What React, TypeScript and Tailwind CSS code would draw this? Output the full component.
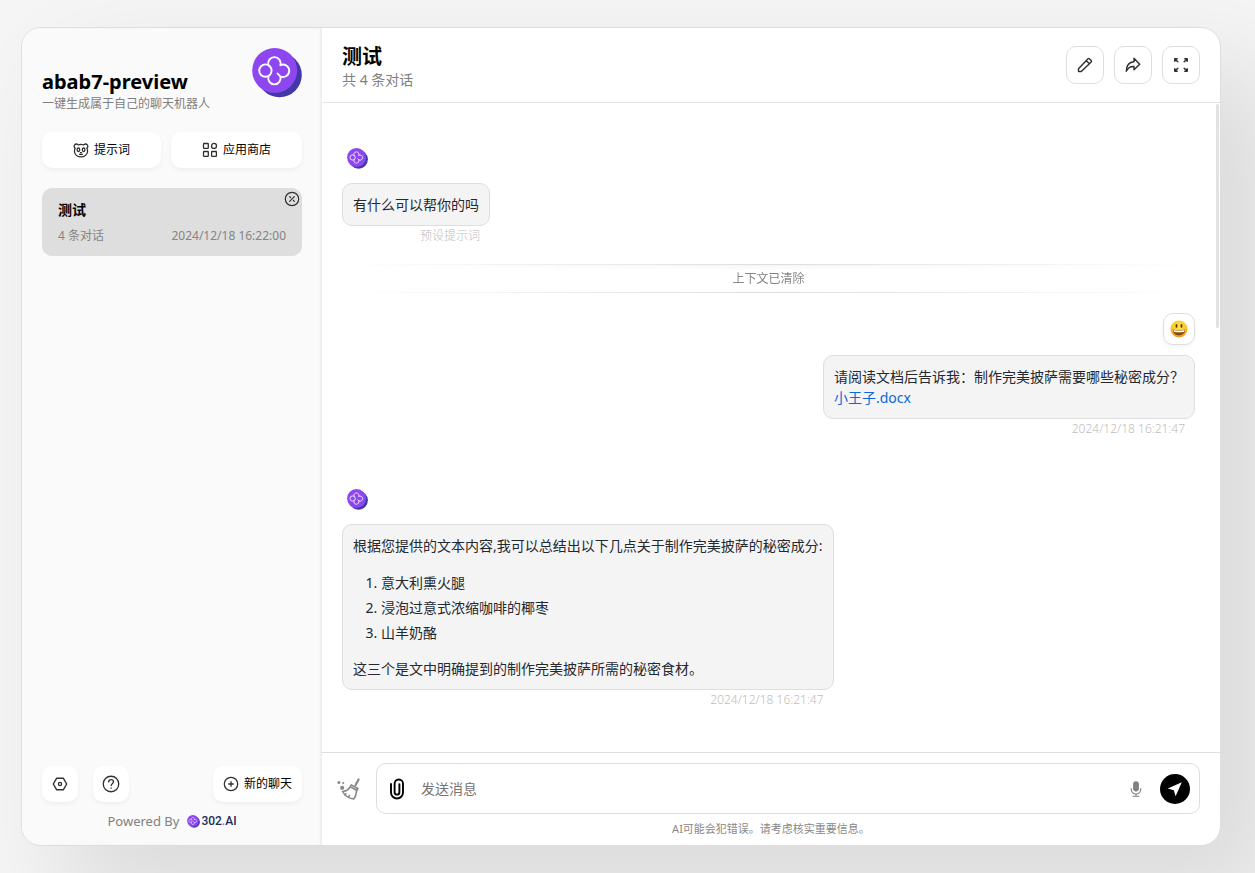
import React from "react";

function BotLogo({ className }: { className?: string }) {
  return (
    <svg viewBox="0 0 50 50" className={className} aria-hidden="true">
      <circle cx="27.5" cy="27" r="22.3" fill="#4338a8" />
      <circle cx="22.7" cy="22.5" r="22.5" fill="#8e47f0" />
      <path
        d="M16.5 17.2A6.2 6.2 0 1 1 28.3 17.2M28.3 17.2A6.2 6.2 0 1 1 28.3 28.3L25.6 25.6M28.3 28.3A6.2 6.2 0 1 1 16.5 28.3"
        fill="none"
        stroke="#fff"
        strokeWidth="1.9"
        strokeLinecap="round"
      />
      <circle cx="13.4" cy="22.6" r="6.2" fill="none" stroke="#fff" strokeWidth="1.9" />
    </svg>
  );
}

function Icon({ children, className = "size-4", width = 1.3 }: { children: React.ReactNode; className?: string; width?: number }) {
  return (
    <svg
      viewBox="0 0 16 16"
      className={className}
      fill="none"
      stroke="currentColor"
      strokeWidth={width}
      strokeLinecap="round"
      strokeLinejoin="round"
      aria-hidden="true"
    >
      {children}
    </svg>
  );
}

const PandaIcon = () => (
  <Icon width={1.3}>
    <path d="M2.2 6.2C1 5.600.8 3.900 1.700 2.800c1-1.200 2.900-1 3.600.2 1.700-.7 3.700-.7 5.400 0 .7-1.200 2.600-1.400 3.600-.2.9 1.100.7 2.800-.5 3.400.7 1.200.9 2.400.7 3.700-.4 3-3.200 5-6.500 5s-6.100-2-6.500-5c-.2-1.300 0-2.500.7-3.700Z" />
    <ellipse cx="5.4" cy="7.800" rx="1.300" ry="1.800" />
    <ellipse cx="10.6" cy="7.800" rx="1.300" ry="1.800" />
    <path d="M7.400 10.600h1.200M6.600 12.300h2.800" />
  </Icon>
);

const AppsIcon = () => (
  <Icon>
    <rect x="1.500" y="1.500" width="4.800" height="4.800" rx=".6" />
    <circle cx="12" cy="3.900" r="2.500" />
    <rect x="1.500" y="9.500" width="4.800" height="4.800" rx=".6" />
    <rect x="9.600" y="9.500" width="4.800" height="4.800" rx=".6" />
  </Icon>
);

const CloseIcon = () => (
  <Icon className="size-4" width={1.200}>
    <circle cx="8" cy="8" r="6.700" />
    <path d="M10.300 5.700 5.700 10.300M5.700 5.700l.8.8M10.300 10.300l-.8-.8" />
  </Icon>
);

const SettingsIcon = () => (
  <Icon width={1.400}>
    <path d="M4.700 2.200h6.600L14.700 8l-3.400 5.800H4.700L1.300 8Z" />
    <circle cx="8" cy="8" r="1.600" />
  </Icon>
);

const HelpIcon = () => (
  <Icon className="size-[18px]" width={1.150}>
    <circle cx="8" cy="8" r="6.900" />
    <path d="M5.900 6.200c.1-1.200 1-2 2.200-2s2.100.8 2.100 1.900c0 1.600-2.100 1.600-2.100 3.300" />
    <path d="M8.100 11.500v.2" />
  </Icon>
);

const AddIcon = () => (
  <Icon>
    <circle cx="8" cy="8" r="6.700" />
    <path d="M8 5.700v4.600M5.700 8h4.600" />
  </Icon>
);

const PencilIcon = () => (
  <Icon width={1.400}>
    <path d="M1.500 14.500v-2.800L11 1.700c.4-.4.900-.4 1.300 0l1.900 1.900c.4.4.4.9 0 1.300L4.300 14.500ZM9.200 3.600l3.200 3.100" />
  </Icon>
);

const ShareIcon = () => (
  <Icon width={1.400}>
    <path d="M9 1.300 14.700 7.200 9 12.800V9.500C5.500 9.300 3 10.700 1.300 14.300 1.400 8.700 4.200 5 9 4.700Z" />
  </Icon>
);

const ExpandIcon = () => (
  <Icon width={1.500}>
    <path d="M4.800 4.800 2.200 2.200M1.800 4.200V1.800h2.400M11.200 4.800l2.600-2.600M11.800 1.800h2.400v2.400M4.800 11.200l-2.600 2.600M1.800 11.800v2.400h2.400M11.200 11.200l2.600 2.600M14.200 11.800v2.400h-2.400" />
  </Icon>
);

const BroomIcon = () => (
  <svg viewBox="0 0 24 24" className="size-6" fill="none" stroke="currentColor" strokeWidth="1.500" strokeLinecap="round" strokeLinejoin="round" aria-hidden="true">
    <path d="m21.600 2.500-3 5.500" strokeWidth="2.200" />
    <path d="M14.200 7.900 21 11.500l-1 2-6.800-3.600Z" fill="currentColor" fillOpacity=".35" />
    <path d="M12.800 10.500c-1.500 2.300-4.300 3.800-7.300 4 2.200 4.100 5.700 6.700 11.200 7.500 2-2.300 2.800-5.300 2.800-8.500M9 16.700l-1.300 1.300M12.500 18.500l-1 1.700" />
    <circle cx="5.200" cy="10.800" r="2.100" fill="currentColor" stroke="none" />
    <circle cx="1.900" cy="5.400" r="1.500" fill="currentColor" stroke="none" />
    <circle cx="6.200" cy="6" r="1.100" fill="currentColor" stroke="none" />
  </svg>
);

const ClipIcon = () => (
  <svg viewBox="0 0 16 22" className="h-[22px] w-4" fill="none" stroke="currentColor" strokeWidth="1.900" strokeLinecap="round" aria-hidden="true">
    <path d="M2 6v8.500a6 6 0 0 0 12 0V5.700a4.200 4.200 0 0 0-8.400 0v8.500a2.400 2.400 0 0 0 4.800 0V6.300" />
  </svg>
);

const MicIcon = () => (
  <svg viewBox="0 0 12 16" className="h-4 w-3" fill="none" stroke="currentColor" strokeWidth="1.100" strokeLinecap="round" aria-hidden="true">
    <rect x="3.100" y=".3" width="5.800" height="10.200" rx="2.900" fill="currentColor" stroke="none" />
    <path d="M1.200 7.500v.7a4.800 4.800 0 0 0 9.600 0v-.7M6 13v2M3 15.200h6" />
  </svg>
);

const SendIcon = () => (
  <svg viewBox="0 0 16 16" className="size-4" fill="currentColor" aria-hidden="true">
    <path d="M14.800 1.200 8.600 15.200 6.800 9.200.8 7.400Z" />
  </svg>
);

const SmileIcon = () => (
  <svg viewBox="0 0 18 18" className="size-[18px]" aria-hidden="true">
    <defs>
      <radialGradient id="face" cx=".5" cy=".35" r=".65">
        <stop offset="0" stopColor="#ffe84a" />
        <stop offset=".65" stopColor="#fdc72b" />
        <stop offset="1" stopColor="#ee8d18" />
      </radialGradient>
    </defs>
    <circle cx="9" cy="9" r="8.500" fill="url(#face)" />
    <ellipse cx="6.500" cy="5.900" rx="1" ry="1.900" fill="#5f3408" />
    <ellipse cx="11.500" cy="5.900" rx="1" ry="1.900" fill="#5f3408" />
    <path d="M2.800 9.600c4 1.100 8.400 1.100 12.400 0 0 3.600-2.600 5.800-6.200 5.800s-6.200-2.200-6.200-5.800Z" fill="#8a4a0c" />
    <path d="M3.400 10c3.700.9 7.500.9 11.200 0 0 .8-.3 1.400-.7 1.900-3.300.6-6.500.6-9.800 0-.4-.5-.7-1.100-.7-1.900Z" fill="#fff" />
  </svg>
);

function SideButton({ icon, text, label, className = "" }: { icon: React.ReactNode; text?: string; label?: string; className?: string }) {
  return (
    <button
      type="button"
      aria-label={label}
      className={`flex h-9 items-center justify-center rounded-[10px] bg-white text-xs text-black shadow-[0_2px_4px_rgba(0,0,0,0.05)] ${className}`}
    >
      <span className="text-[#303030]">{icon}</span>
      {text && <span className="ml-[5px]">{text}</span>}
    </button>
  );
}

function HeaderButton({ icon, label }: { icon: React.ReactNode; label: string }) {
  return (
    <button type="button" aria-label={label} className="flex size-[38px] items-center justify-center rounded-[10px] border border-[#dedede] bg-white text-[#303030]">
      {icon}
    </button>
  );
}

function Message({ user = false, time, children }: { user?: boolean; time: string; children: React.ReactNode }) {
  return (
    <article className={`flex flex-col ${user ? "items-end" : "items-start"}`}>
      {user ? (
        <div className="mb-2.5 flex size-8 items-center justify-center rounded-[10px] border border-[#dedede] shadow-[0_2px_4px_rgba(0,0,0,0.05)]">
          <SmileIcon />
        </div>
      ) : (
        <div className="mb-2.5 flex size-[30px] items-center justify-center">
          <BotLogo className="size-[21px]" />
        </div>
      )}
      <div className="flex flex-col">
        <div className="rounded-[10px] border border-[#dedede] bg-[#f4f4f4] p-2.5 text-sm leading-[21px] text-[#24292f]">{children}</div>
        <time className="h-5 pr-2.5 text-right text-xs leading-5 font-light text-[#bdbdbd]">{time}</time>
      </div>
    </article>
  );
}

function Sidebar() {
  return (
    <aside className="flex w-[300px] shrink-0 flex-col bg-[#fafafa] p-5 pb-[14px] shadow-[inset_-2px_0_2px_rgba(0,0,0,0.05)]">
      <header className="flex items-start justify-between">
        <div className="pt-5">
          <h1 className="text-xl leading-7 font-bold">abab7-preview</h1>
          <p className="text-xs leading-4 text-[#808080]">一键生成属于自己的聊天机器人</p>
        </div>
        <BotLogo className="size-[50px]" />
      </header>
      <div className="mt-5 flex gap-2.5">
        <SideButton icon={<PandaIcon />} text="提示词" className="flex-[119]" />
        <SideButton icon={<AppsIcon />} text="应用商店" className="flex-[131]" />
      </div>
      <nav className="mt-5 flex-1">
        <div className="relative rounded-[10px] bg-[#dedede] px-4 py-3">
          <h2 className="text-sm leading-5 font-bold">测试</h2>
          <div className="mt-2 flex justify-between text-xs leading-4 text-[#858585]">
            <span>4 条对话</span>
            <time>2024/12/18 16:22:00</time>
          </div>
          <button type="button" aria-label="删除" className="absolute top-[3px] right-0.5 text-[#303030]">
            <CloseIcon />
          </button>
        </div>
      </nav>
      <footer>
        <div className="flex gap-[15px]">
          <SideButton icon={<SettingsIcon />} label="设置" className="w-9" />
          <SideButton icon={<HelpIcon />} label="帮助" className="w-9" />
          <SideButton icon={<AddIcon />} text="新的聊天" className="ml-auto px-2.5" />
        </div>
        <div className="mt-[9px] flex items-center justify-center text-[13px] leading-5 text-[#808080]">
          Powered By
          <a href="#" className="ml-2 flex items-center font-['Roboto',sans-serif] text-xs font-medium text-[#1f2c55]">
            <BotLogo className="mr-px size-[13px]" />
            <span>302<span className="text-[#a259f7]">.</span>AI</span>
          </a>
        </div>
      </footer>
    </aside>
  );
}

export default function App() {
  return (
    <div className="flex min-h-screen bg-[#f5f5f5] pt-[27px] pr-[34px] pb-[27px] pl-[21px] font-['Noto_Sans','Noto_Sans_CJK_SC',sans-serif] text-black">
      <div className="flex flex-1 overflow-hidden rounded-[20px] border border-[#dedede] bg-white shadow-[50px_50px_100px_10px_rgba(0,0,0,0.1)]">
        <Sidebar />
        <main className="flex min-w-0 flex-1 flex-col">
          <header className="flex items-center justify-between border-b border-[#e3e3e3] px-5 py-[14px]">
            <div>
              <h2 className="text-xl leading-[30px] font-bold">测试</h2>
              <p className="text-sm leading-4 text-[#808080]">共 4 条对话</p>
            </div>
            <div className="flex gap-2.5">
              <HeaderButton icon={<PencilIcon />} label="编辑" />
              <HeaderButton icon={<ShareIcon />} label="分享" />
              <HeaderButton icon={<ExpandIcon />} label="全屏" />
            </div>
          </header>

          <section className="relative flex-1 pt-10 pr-[25px] pl-5">
            <div className="absolute top-px right-px h-56 w-[3px] rounded-sm bg-[#e2e2e2]" />
            <Message time="预设提示词">有什么可以帮你的吗</Message>
            <div className="mt-[18px] mb-5 border-y border-[#dedede] py-1 text-center text-xs leading-[19px] text-[#808080] shadow-[inset_0_2px_4px_rgba(0,0,0,0.05)] [mask-image:linear-gradient(to_right,transparent,black,transparent)]">
              上下文已清除
            </div>
            <Message user time="2024/12/18 16:21:47">
              <p>请阅读文档后告诉我：制作完美披萨需要哪些秘密成分？</p>
              <a href="#" className="text-[#0969da]">小王子.docx</a>
            </Message>
            <div className="mt-[45px]">
              <Message time="2024/12/18 16:21:47">
                <p>根据您提供的文本内容,我可以总结出以下几点关于制作完美披萨的秘密成分:</p>
                <ol className="mt-4 mb-[15px] flex list-decimal flex-col gap-1 pl-7">
                  <li>意大利熏火腿</li>
                  <li>浸泡过意式浓缩咖啡的椰枣</li>
                  <li>山羊奶酪</li>
                </ol>
                <p>这三个是文中明确提到的制作完美披萨所需的秘密食材。</p>
              </Message>
            </div>
          </section>

          <footer className="border-t border-[#dedede] pt-2.5">
            <div className="flex items-center gap-[15px] pr-5 pl-[15px]">
              <button type="button" aria-label="清除上下文" className="text-[#888888]">
                <BroomIcon />
              </button>
              <div className="flex h-[51px] flex-1 items-center rounded-[10px] border border-[#dedede] pr-[9px] pl-3">
                <button type="button" aria-label="上传附件">
                  <ClipIcon />
                </button>
                <input aria-label="发送消息" placeholder="发送消息" className="mx-4 min-w-0 flex-1 text-sm outline-none placeholder:text-[#757575]" />
                <button type="button" aria-label="语音输入" className="mr-[18px] text-[#808080]">
                  <MicIcon />
                </button>
                <button type="button" aria-label="发送" className="flex size-[30px] items-center justify-center rounded-full bg-black text-white">
                  <SendIcon />
                </button>
              </div>
            </div>
            <p className="pt-[5px] pb-1.5 text-center text-[11px] leading-5 text-[#888888]">AI可能会犯错误。请考虑核实重要信息。</p>
          </footer>
        </main>
      </div>
    </div>
  );
}
